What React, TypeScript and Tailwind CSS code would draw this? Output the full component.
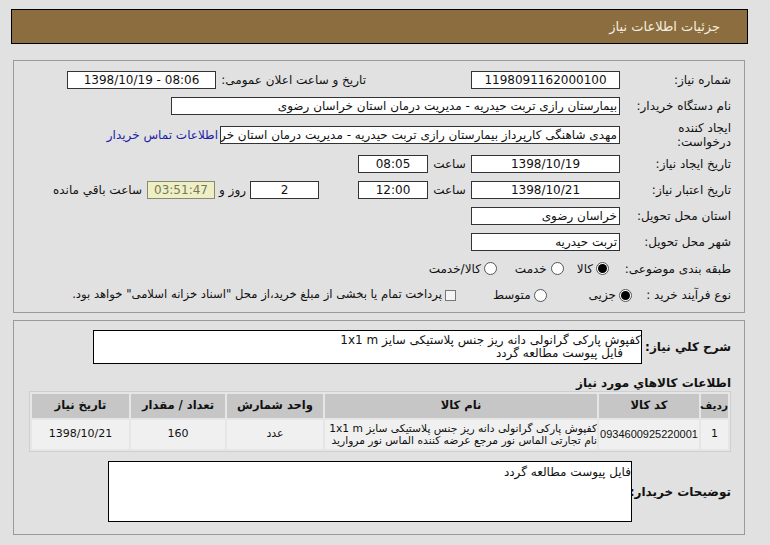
import React from 'react';

const font = { fontFamily: '"DejaVu Sans", sans-serif' };

function Field({ w, children, align = 'center', className = '' }: { w: string; children?: React.ReactNode; align?: 'center' | 'right'; className?: string }) {
  return (
    <div
      className={`${w} h-[18px] shrink-0 bg-white border border-[#333] leading-[16px] overflow-hidden whitespace-nowrap ${align === 'center' ? 'text-center' : 'text-right pr-[2px]'} ${className}`}
    >
      {children}
    </div>
  );
}

function Radio({ checked }: { checked?: boolean }) {
  return (
    <span className="w-[13px] h-[13px] shrink-0 rounded-full border border-[#555] bg-white flex items-center justify-center">
      {checked && <span className="w-[9px] h-[9px] rounded-full bg-black" />}
    </span>
  );
}

function Row({ label, h = 'h-[26px]', children }: { label: React.ReactNode; h?: string; children?: React.ReactNode }) {
  return (
    <div className={`flex items-center ${h}`}>
      <div className="w-[111px] shrink-0 leading-[14px] whitespace-nowrap">{label}</div>
      {children}
    </div>
  );
}

export default function App() {
  return (
    <div dir="rtl" style={font} className="min-h-[545px] w-[770px] bg-[#e1e1e1] pt-[9px] pl-[11px] pr-[22px] text-[12px] text-[#111]">
      <div className="h-[35px] border border-black bg-[#8c6d40] flex items-center pr-[27px] text-[13px] text-[#f4eedf]">
        جزئیات اطلاعات نیاز
      </div>

      <div className="mt-[16px] ml-[2px] mr-[3px] border border-[#9a9a9a] pt-[6px] pb-[4px] pr-[13px]">
        <Row label="شماره نیاز:">
          <Field w="w-[149px]">1198091162000100</Field>
          <div className="w-[105px] shrink-0" />
          <div className="w-[145px] shrink-0 whitespace-nowrap">تاریخ و ساعت اعلان عمومی:</div>
          <div className="w-[5px] shrink-0" />
          <Field w="w-[149px]">
            <span dir="ltr">1398/10/19 - 08:06</span>
          </Field>
        </Row>
        <Row label="نام دستگاه خریدار:">
          <Field w="w-[449px]" align="right">بیمارستان رازی تربت حیدریه - مدیریت درمان استان خراسان رضوی</Field>
        </Row>
        <Row label={<>ایجاد کننده<br />درخواست:</>} h="h-[32px]">
          <Field w="w-[400px]" align="right">مهدی شاهنگی کارپرداز بیمارستان رازی تربت حیدریه - مدیریت درمان استان خرا</Field>
          <span className="mr-[2px] text-[#1c1ca8] whitespace-nowrap">اطلاعات تماس خریدار</span>
        </Row>
        <Row label="تاریخ ایجاد نیاز:">
          <Field w="w-[149px]">1398/10/19</Field>
          <span className="w-[43px] shrink-0 text-center">ساعت</span>
          <Field w="w-[70px]">08:05</Field>
        </Row>
        <Row label="تاریخ اعتبار نیاز:">
          <Field w="w-[149px]">1398/10/21</Field>
          <span className="w-[43px] shrink-0 text-center">ساعت</span>
          <Field w="w-[70px]">12:00</Field>
          <div className="w-[39px] shrink-0" />
          <Field w="w-[69px]">2</Field>
          <span className="w-[35px] shrink-0 text-center whitespace-nowrap">روز و</span>
          <div className="w-[68px] h-[18px] shrink-0 bg-[#efefc6] border border-[#8a8a70] text-center leading-[16px] text-[#77775a]">03:51:47</div>
          <span className="mr-[5px] whitespace-nowrap">ساعت باقي مانده</span>
        </Row>
        <Row label="استان محل تحویل:">
          <Field w="w-[149px]" align="right">خراسان رضوی</Field>
        </Row>
        <Row label="شهر محل تحویل:">
          <Field w="w-[149px]" align="right">تربت حیدریه</Field>
        </Row>
        <Row label="طبقه بندی موضوعی:" h="h-[27px]">
          <div className="flex items-center pr-[11px]">
            <Radio checked />
            <span className="mr-[3px]">کالا</span>
            <span className="mr-[13px]"><Radio /></span>
            <span className="mr-[4px]">خدمت</span>
            <span className="mr-[18px]"><Radio /></span>
            <span className="mr-[3px]">کالا/خدمت</span>
          </div>
        </Row>
        <Row label="نوع فرآیند خرید :">
          <div className="flex items-center -mr-[12px]">
            <Radio checked />
            <span className="mr-[3px]">جزیی</span>
            <span className="mr-[42px]"><Radio /></span>
            <span className="mr-[3px]">متوسط</span>
            <span className="mr-[37px] w-[11px] h-[11px] border border-[#777] bg-[#f4f4f4] shrink-0" />
            <span className="mr-[3px] whitespace-nowrap text-[11.6px]">پرداخت تمام یا بخشی از مبلغ خرید،از محل "اسناد خزانه اسلامی" خواهد بود.</span>
          </div>
        </Row>
      </div>

      <div className="mt-[7px] ml-[2px] mr-[3px] border border-[#9a9a9a] pt-[9px] pb-[12px] pr-[13px] pl-[14px]">
        <div className="flex items-center">
          <div className="w-[89px] shrink-0 font-bold text-[12px] whitespace-nowrap">شرح کلي نیاز:</div>
          <div className="w-[549px] h-[34px] bg-white border border-black text-right leading-[13px] pt-[3px]">
            <div>کفپوش پارکی گرانولی دانه ریز جنس پلاستیکی سایز 1x1 m</div>
            <div className="pr-[18px]">فایل پیوست مطالعه گردد</div>
          </div>
        </div>
        <div className="mt-[11px] font-bold text-[12px] leading-[16px]">اطلاعات کالاهاي مورد نیاز</div>
        <table className="w-[702px] table-fixed border-separate border-spacing-[2px] bg-[#e6e6e6] border border-[#cfcfcf] text-center">
          <thead>
            <tr className="h-[24px] font-bold text-[11.5px]">
              <th className="w-[27px] bg-[#c6c6c6] whitespace-nowrap text-[10.5px]">ردیف</th>
              <th className="w-[100px] bg-[#c6c6c6]">کد کالا</th>
              <th className="w-[272px] bg-[#c6c6c6]">نام کالا</th>
              <th className="w-[96px] bg-[#c6c6c6]">واحد شمارش</th>
              <th className="w-[94px] bg-[#c6c6c6]">تعداد / مقدار</th>
              <th className="bg-[#c6c6c6]">تاریخ نیاز</th>
            </tr>
          </thead>
          <tbody>
            <tr className="h-[29px] text-[11px]">
              <td className="bg-[#f0f0f0]">1</td>
              <td className="bg-[#f0f0f0] font-['Liberation_Sans'] text-[11px]">0934600925220001</td>
              <td className="bg-[#f0f0f0] text-right leading-[12px] whitespace-nowrap overflow-hidden text-[10.7px]">
                <div>کفپوش پارکی گرانولی دانه ریز جنس پلاستیکی سایز 1x1 m</div>
                <div>نام تجارتی الماس نور مرجع عرضه کننده الماس نور مروارید</div>
              </td>
              <td className="bg-[#f0f0f0]">عدد</td>
              <td className="bg-[#f0f0f0]">160</td>
              <td className="bg-[#f0f0f0]">1398/10/21</td>
            </tr>
          </tbody>
        </table>
        <div className="mt-[9px] flex items-center">
          <div className="w-[99px] shrink-0 font-bold text-[12px] whitespace-nowrap">توضیحات خریدار:</div>
          <div className="w-[524px] h-[61px] bg-white border border-black text-right leading-[14px] pt-[3px]">
            فایل پیوست مطالعه گردد
          </div>
        </div>
      </div>
    </div>
  );
}
